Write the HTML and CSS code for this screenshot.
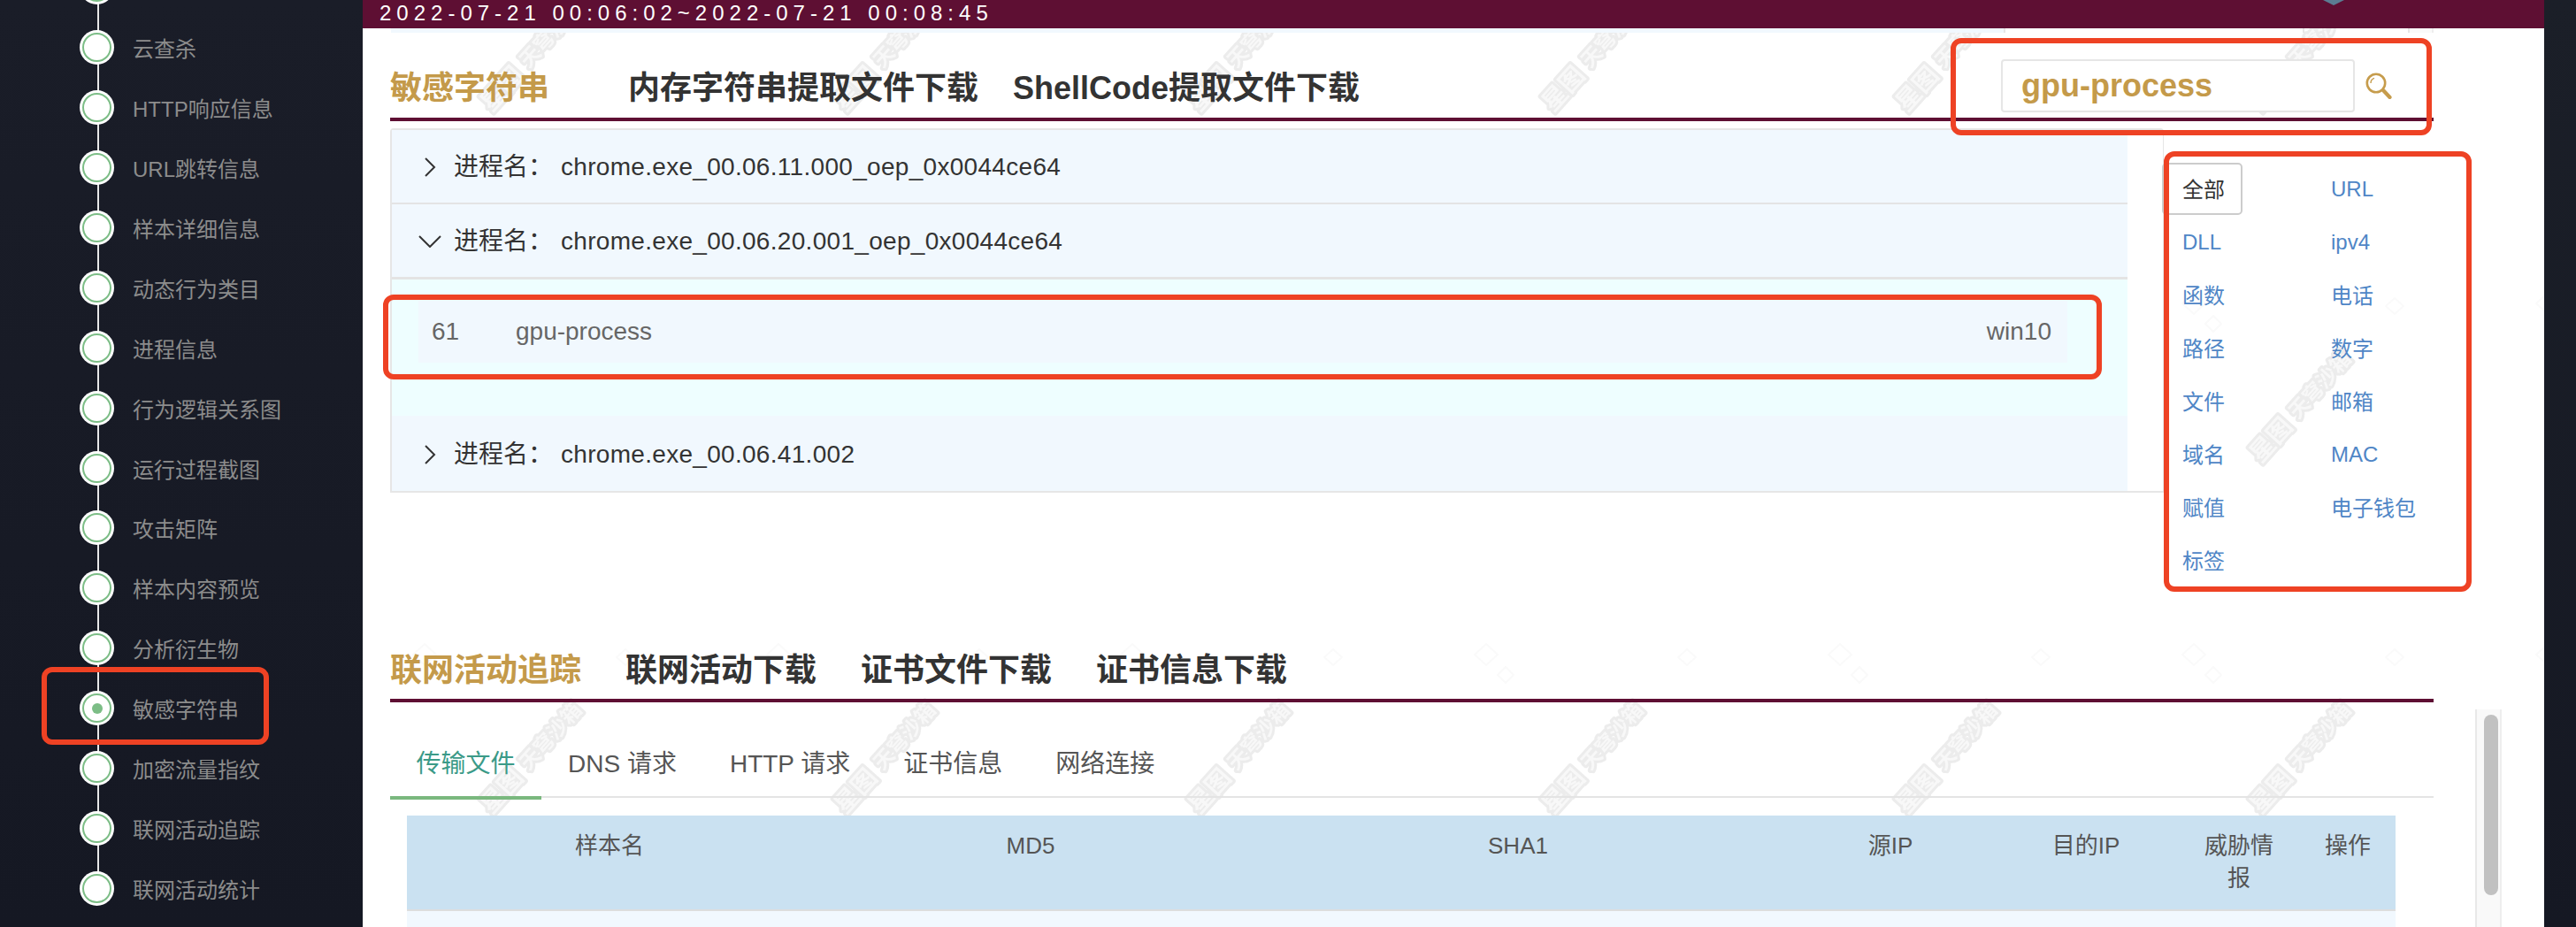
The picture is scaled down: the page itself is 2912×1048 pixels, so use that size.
FILE: index.html
```html
<!DOCTYPE html>
<html lang="zh-CN">
<head>
<meta charset="utf-8">
<title>敏感字符串</title>
<link rel="stylesheet" href="styles.css">
</head>
<body>
<div class="app">
  <aside class="sidebar">
    <ul class="steps">
      <li class="step"><span class="node"></span><span class="step-label"></span></li>
      <li class="step"><span class="node"></span><span class="step-label">云查杀</span></li>
      <li class="step"><span class="node"></span><span class="step-label">HTTP响应信息</span></li>
      <li class="step"><span class="node"></span><span class="step-label">URL跳转信息</span></li>
      <li class="step"><span class="node"></span><span class="step-label">样本详细信息</span></li>
      <li class="step"><span class="node"></span><span class="step-label">动态行为类目</span></li>
      <li class="step"><span class="node"></span><span class="step-label">进程信息</span></li>
      <li class="step"><span class="node"></span><span class="step-label">行为逻辑关系图</span></li>
      <li class="step"><span class="node"></span><span class="step-label">运行过程截图</span></li>
      <li class="step"><span class="node"></span><span class="step-label">攻击矩阵</span></li>
      <li class="step"><span class="node"></span><span class="step-label">样本内容预览</span></li>
      <li class="step"><span class="node"></span><span class="step-label">分析衍生物</span></li>
      <li class="step step-active"><span class="node"></span><span class="step-label">敏感字符串</span></li>
      <li class="step"><span class="node"></span><span class="step-label">加密流量指纹</span></li>
      <li class="step"><span class="node"></span><span class="step-label">联网活动追踪</span></li>
      <li class="step"><span class="node"></span><span class="step-label">联网活动统计</span></li>
    </ul>
  </aside>

  <main class="main">
    <svg class="watermark" width="2466" height="1048" aria-hidden="true">
      <defs>
        <pattern id="wm" patternUnits="userSpaceOnUse" x="7" y="-150" width="400" height="397">
          <g transform="rotate(-48 150 250)">
            <text class="wm-text wm-big" x="150" y="260" text-anchor="middle">星图</text>
            <text class="wm-text wm-small" x="233" y="258" text-anchor="middle">天穹沙箱</text>
          </g>
          <path class="wm-faint" d="M63 84l13 12-13 12-13-12zM85 110l9 9-9 9-9-9zM290 90l10 9-10 9-10-9z"></path>
        </pattern>
      </defs>
      <rect width="2466" height="1048" fill="url(#wm)"></rect>
    </svg>

    <div class="topbar">
      <span class="date">2022-07-21 00:06:02~2022-07-21 00:08:45</span>
      <svg class="top-mark" width="24" height="6" viewBox="0 0 24 6"><path d="M0 0h24L12 6z" fill="#5b7c92"></path></svg>
    </div>

    <div class="content">
      <div class="band">
        <span class="band-fill"></span>
        <span class="band-cell band-a"></span>
        <span class="band-cell band-b"></span>
        <span class="band-cell band-c"></span>
      </div>

      <div class="sec-head sec-head-first">
        <span class="sec-title sec-title-first">敏感字符串</span>
        <a class="sec-link link-mem">内存字符串提取文件下载</a>
        <a class="sec-link link-shell">ShellCode提取文件下载</a>
        <div class="search">
          <div class="search-input">gpu-process</div>
          <svg class="search-icon" width="30" height="30" viewBox="0 0 30 30" fill="none">
            <circle cx="12" cy="12" r="10.2" stroke="#c69c4c" stroke-width="2.6"></circle>
            <path d="M6 12a6 6 0 0 1 4-5.6" stroke="#c69c4c" stroke-width="1.4"></path>
            <path d="M20.5 20.5l7 7.5" stroke="#c69c4c" stroke-width="4.2" stroke-linecap="round"></path>
          </svg>
        </div>
      </div>

      <div class="strings">
        <div class="accordion">
          <div class="acc-head">
            <svg class="chev" width="26" height="22" viewBox="0 0 26 22" fill="none"><path d="M8 1l10 10L8 21" stroke="#333" stroke-width="2"></path></svg>
            <span class="acc-label">进程名：</span><span class="acc-name">chrome.exe_00.06.11.000_oep_0x0044ce64</span>
          </div>
          <div class="acc-head acc-head-open">
            <svg class="chev" width="26" height="14" viewBox="0 0 26 14" fill="none"><path d="M1 1l12 12L25 1" stroke="#333" stroke-width="2"></path></svg>
            <span class="acc-label">进程名：</span><span class="acc-name">chrome.exe_00.06.20.001_oep_0x0044ce64</span>
          </div>
          <div class="acc-panel">
            <div class="str-row">
              <span class="str-no">61</span>
              <span class="str-text">gpu-process</span>
              <span class="str-tag">win10</span>
            </div>
          </div>
          <div class="acc-head acc-head-last">
            <svg class="chev" width="26" height="22" viewBox="0 0 26 22" fill="none"><path d="M8 1l10 10L8 21" stroke="#333" stroke-width="2"></path></svg>
            <span class="acc-label">进程名：</span><span class="acc-name">chrome.exe_00.06.41.002</span>
          </div>
        </div>

        <div class="filters">
          <a class="filter filter-on">全部</a><a class="filter filter-latin">URL</a>
          <a class="filter filter-latin">DLL</a><a class="filter filter-latin">ipv4</a>
          <a class="filter">函数</a><a class="filter">电话</a>
          <a class="filter">路径</a><a class="filter">数字</a>
          <a class="filter">文件</a><a class="filter">邮箱</a>
          <a class="filter">域名</a><a class="filter filter-latin">MAC</a>
          <a class="filter">赋值</a><a class="filter">电子钱包</a>
          <a class="filter">标签</a>
        </div>
      </div>

      <div class="sec-head sec-head-second">
        <span class="sec-title">联网活动追踪</span>
        <a class="sec-link">联网活动下载</a>
        <a class="sec-link">证书文件下载</a>
        <a class="sec-link">证书信息下载</a>
      </div>

      <div class="tabs">
        <span class="tab tab-on">传输文件</span>
        <span class="tab">DNS 请求</span>
        <span class="tab">HTTP 请求</span>
        <span class="tab">证书信息</span>
        <span class="tab">网络连接</span>
      </div>

      <div class="table">
        <div class="thead">
          <span class="th">样本名</span>
          <span class="th">MD5</span>
          <span class="th">SHA1</span>
          <span class="th">源IP</span>
          <span class="th">目的IP</span>
          <span class="th th-wrap">威胁情报</span>
          <span class="th">操作</span>
        </div>
        <div class="tbody-row"></div>
      </div>
    </div>

    <div class="scrollbar"><span class="scroll-thumb"></span></div>
  </main>

  <div class="edge"></div>

  <span class="mark mark-nav"></span>
  <span class="mark mark-search"></span>
  <span class="mark mark-row"></span>
  <span class="mark mark-filter"></span>
</div>
</body>
</html>
```

FILE: styles.css
```css
* { box-sizing: border-box; }

html, body {
  margin: 0;
  height: 100%;
  overflow: hidden;
  background: #fff;
}

body {
  font-family: "Liberation Sans", "Noto Sans CJK SC", sans-serif;
  color: #333;
}

.app {
  position: relative;
  display: flex;
  width: 2912px;
  height: 1048px;
  overflow: hidden;
}

/* sidebar */
.sidebar {
  flex: 0 0 410px;
  background: linear-gradient(#1a1d28, #151823);
  overflow: hidden;
}

.steps {
  position: relative;
  list-style: none;
  margin: -48px 0 0;
  padding: 0;
}

.steps::before {
  content: "";
  position: absolute;
  left: 109.5px;
  top: 0;
  bottom: 34px;
  width: 2px;
  background: #e8e8e8;
}

.step {
  position: relative;
  display: flex;
  align-items: center;
  height: 67.9px;
  padding-left: 90px;
}

.node {
  position: relative;
  flex: 0 0 39px;
  height: 39px;
  border-radius: 50%;
  background: #fff;
  display: flex;
  align-items: center;
  justify-content: center;
}

.node::before {
  content: "";
  width: 29px;
  height: 29px;
  border-radius: 50%;
  border: 2px solid #7cbd86;
}

.step-active .node::after {
  content: "";
  position: absolute;
  left: 13.5px;
  top: 13.5px;
  width: 12px;
  height: 12px;
  border-radius: 50%;
  background: #7cbd86;
}

.step-label {
  margin-left: 21px;
  padding-top: 5px;
  font-size: 24px;
  line-height: 30px;
  color: #8c8c8c;
  white-space: nowrap;
}

/* main */
.main {
  position: relative;
  flex: 0 0 2466px;
  background: #fff;
  overflow: hidden;
}

.watermark {
  position: absolute;
  left: 0;
  top: 0;
}

.wm-text {
  font-family: "Noto Sans CJK SC", sans-serif;
  font-weight: 700;
  fill: #f8f8f8;
  stroke: #ececec;
  stroke-width: 6px;
  paint-order: stroke;
  stroke-linejoin: round;
}

.wm-big { font-size: 28px; }
.wm-small { font-size: 23px; }

.wm-faint {
  fill: none;
  stroke: #fafafa;
  stroke-width: 2px;
}

.topbar {
  position: relative;
  display: flex;
  justify-content: space-between;
  align-items: flex-start;
  height: 32px;
  padding: 0 226px 0 19px;
  background: #5e0f33;
}

.date {
  font-size: 24px;
  line-height: 30px;
  letter-spacing: 6px;
  color: #fff;
  white-space: nowrap;
}

.top-mark { display: block; }

.content {
  position: relative;
  padding: 0 94px 0 31px;
}

.band {
  display: flex;
  height: 5px;
  margin: 0 31px 0 1px;
}

.band-fill { flex: 0 0 1823px; background: #f1f8fe; }
.band-cell { border-left: 2px solid #e6e6e6; }
.band-a { flex: 0 0 338px; }
.band-b { flex: 0 0 119px; }
.band-c { flex: 1; background: #fafafa; border-right: 2px solid #eee; }

.sec-head {
  display: flex;
  align-items: center;
  height: 70px;
  margin-right: 31px;
  border-bottom: 4px solid #5e0f33;
}

.sec-head-first { margin-top: 30px; }
.sec-head-second { margin-top: 61px; padding-top: 1px; }

.sec-title,
.sec-link {
  font-size: 36px;
  line-height: 46px;
  font-weight: 700;
  white-space: nowrap;
}

.sec-title { color: #c49a4a; }
.sec-link { margin-left: 50px; color: #333; }
.sec-title-first + .link-mem { margin-left: 89px; }
.link-shell { margin-left: 39px; }

.search {
  display: flex;
  align-items: center;
  align-self: flex-start;
  gap: 12px;
  margin-left: auto;
  margin-right: 47px;
}

.search-input {
  width: 400px;
  height: 60px;
  padding-left: 21px;
  border: 2px solid #e6e6e6;
  border-radius: 4px;
  background: #fff;
  font-size: 36px;
  font-weight: 700;
  line-height: 56px;
  color: #c49a4a;
}

.search-icon { display: block; }

/* strings */
.strings {
  display: flex;
  align-items: flex-start;
  margin-top: 8px;
}

.accordion {
  flex: 0 0 2005px;
  padding-right: 40px;
  background: #fff;
  border: 2px solid #e6e6e6;
  border-bottom-width: 2px;
  border-right-width: 1px;
  border-radius: 4px 4px 0 0;
}

.acc-head {
  display: flex;
  align-items: center;
  height: 84px;
  padding: 2px 0 0 30px;
  background: #f1f8fe;
  border-bottom: 2px solid #e4e4e4;
}

.acc-head-open { height: 85px; border-bottom-width: 3px; }
.acc-head-last { height: 85px; padding-top: 4px; border-bottom-color: #f1f8fe; }

.chev { flex: 0 0 26px; display: block; }

.acc-label {
  margin-left: 14px;
  font-size: 28px;
  line-height: 36px;
  color: #333;
}

.acc-name {
  margin-left: 9px;
  font-size: 28px;
  line-height: 36px;
  letter-spacing: 0.3px;
  color: #333;
}

.acc-panel {
  padding: 24px 68px 60px 30px;
  background: #eefeff;
}

.str-row {
  display: flex;
  align-items: center;
  height: 70px;
  padding: 0 18px 0 15px;
  background: #f1f8fe;
  font-size: 28px;
  color: #666;
}

.str-no { flex: 0 0 95px; }
.str-text { flex: 1; }

/* filter grid */
.filters {
  display: grid;
  grid-template-columns: 168px 168px;
  grid-auto-rows: 60px;
  margin-top: 38px;
  margin-left: -2px;
}

.filter {
  display: flex;
  align-items: center;
  padding: 0 0 2px 23px;
  font-size: 24px;
  color: #4f86c6;
  white-space: nowrap;
}

.filter-latin { padding: 2px 0 0 23px; }

.filter-on {
  justify-self: start;
  width: 91px;
  height: 59px;
  margin-top: 1px;
  padding-left: 21px;
  border: 2px solid #ccc;
  border-radius: 5px;
  color: #333;
}

/* tabs */
.tabs {
  display: flex;
  height: 82px;
  margin: 26px 31px 0 0;
  border-bottom: 2px solid #e4e4e4;
}

.tab {
  position: relative;
  display: flex;
  align-items: center;
  height: 80px;
  padding: 2px 30px 0;
  font-size: 28px;
  color: #555;
  white-space: nowrap;
}

.tab-on { padding: 2px 29.5px 0; color: #3b9a88; }

.tab-on::after {
  content: "";
  position: absolute;
  left: 0;
  right: 0;
  bottom: -4px;
  height: 4px;
  background: #7ab87e;
}

/* table */
.table {
  position: relative;
  width: 2248px;
  margin: 20px 0 0 19px;
}

.thead {
  display: grid;
  grid-template-columns: 458px 494px 608px 234px 208px 138px 108px;
  height: 108px;
  background: #cae1f1;
  border-bottom: 2px solid #ddd;
}

.th {
  padding-top: 16px;
  font-size: 26px;
  line-height: 37px;
  text-align: center;
  color: #555;
}

.th-wrap { padding-left: 24px; padding-right: 24px; }

.tbody-row {
  height: 30px;
  background: #f1f8fe;
}

/* scrollbar */
.scrollbar {
  position: absolute;
  left: 2388px;
  top: 802px;
  bottom: 0;
  width: 30px;
  padding: 6px 6px 0 8px;
  background: #f9f9f9;
  border-left: 2px solid #e8e8e8;
  border-right: 2px solid #eee;
}

.scroll-thumb {
  display: block;
  width: 16px;
  height: 204px;
  border-radius: 8px;
  background: #c1c1c1;
}

.edge {
  flex: 0 0 36px;
  background: linear-gradient(#1b1f28, #151823);
}

/* red annotation frames over the page */
.mark {
  position: absolute;
  border: 6px solid #ee4224;
  border-radius: 12px;
  pointer-events: none;
}

.mark-nav { left: 47px; top: 754px; width: 257px; height: 88px; }
.mark-search { left: 2205px; top: 43px; width: 544px; height: 110px; }
.mark-row { left: 433px; top: 333px; width: 1943px; height: 96px; }
.mark-filter { left: 2446px; top: 171px; width: 348px; height: 498px; }
```
